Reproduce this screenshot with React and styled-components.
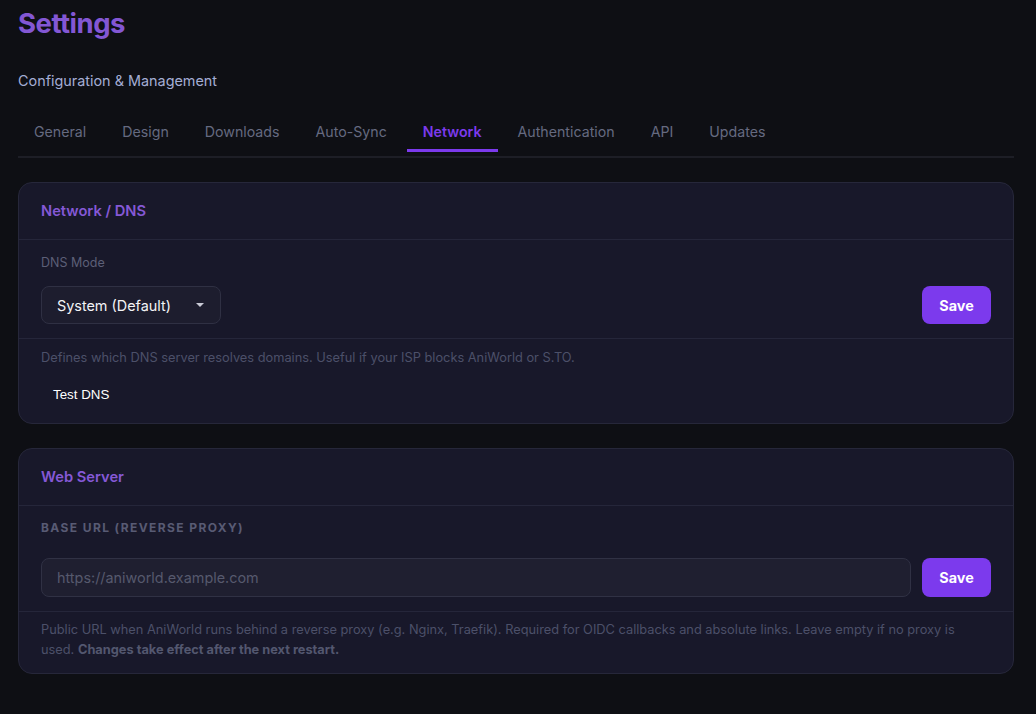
import React, { useState } from "react";
import styled, { createGlobalStyle } from "styled-components";

const GlobalStyle = createGlobalStyle`
  html, body {
    margin: 0;
    padding: 0;
    background: #0e0f14;
  }
  body {
    font-family: Inter, "Noto Sans", "Liberation Sans", sans-serif;
    color: #e5e7eb;
  }
  * {
    box-sizing: border-box;
  }
`;

const Page = styled.div`
  width: 996px;
  margin-left: 18px;
  padding-top: 5px;
  padding-bottom: 40px;
`;

const Title = styled.h1`
  margin: 0;
  font-size: 27.5px;
  line-height: 36px;
  font-weight: 700;
  color: #8357d4;
  letter-spacing: -0.5px;
`;

const Subtitle = styled.p`
  margin: 30px 0 0;
  font-size: 14.4px;
  line-height: 20px;
  color: #a4add4;
`;

const TabBar = styled.nav`
  display: flex;
  gap: 4px;
  margin-top: 21px;
  padding-bottom: 4px;
  border-bottom: 2px solid #1d1e26;
`;

const Tab = styled.button`
  background: none;
  border: none;
  border-bottom: 3px solid ${(p) => (p.$active ? "#7c3aed" : "transparent")};
  padding: 10px 16px 7px;
  font-family: inherit;
  font-size: 14.2px;
  line-height: 20px;
  font-weight: ${(p) => (p.$active ? 600 : 400)};
  color: ${(p) => (p.$active ? "#7c3aed" : "#656a80")};
  cursor: pointer;
`;

const Cards = styled.div`
  display: flex;
  flex-direction: column;
  gap: 24px;
  margin-top: 24px;
`;

const Card = styled.section`
  background: #18182a;
  border: 1px solid #26273a;
  border-radius: 14px;
`;

const CardHeader = styled.h2`
  margin: 0;
  padding: 18px 22px;
  font-size: 14.7px;
  line-height: 20px;
  font-weight: 600;
  color: #8558d6;
  border-bottom: 1px solid #25263a;
`;

const CardBody = styled.div`
  padding: ${(p) => p.$pad || "14px 22px 14px"};
`;

const Label = styled.div`
  font-size: 12.5px;
  line-height: 18px;
  color: #5c5f77;
  margin-bottom: 14px;
`;

const CapsLabel = styled.div`
  font-size: 12px;
  line-height: 16px;
  font-weight: 700;
  letter-spacing: 1.4px;
  text-transform: uppercase;
  color: #585b74;
  margin-bottom: 22px;
`;

const Row = styled.div`
  display: flex;
  align-items: center;
  justify-content: space-between;
  gap: 11px;
`;

const Select = styled.div`
  width: 180px;
  height: 38px;
  display: flex;
  align-items: center;
  justify-content: space-between;
  padding: 0 16px 0 15px;
  background: #1d1d2e;
  border: 1px solid #2f3043;
  border-radius: 8px;
  font-size: 14.4px;
  color: #f3f4f6;
`;

const Caret = styled.span`
  width: 0;
  height: 0;
  border-left: 4px solid transparent;
  border-right: 4px solid transparent;
  border-top: 4px solid #c9cad6;
`;

const Input = styled.input`
  flex: 1;
  height: 39px;
  padding: 0 15px;
  background: #1f1f30;
  border: 1px solid #303144;
  border-radius: 8px;
  font-family: inherit;
  font-size: 14.4px;
  color: #e5e7eb;
  outline: none;
  &::placeholder {
    color: #56596d;
  }
`;

const SaveButton = styled.button`
  width: 69px;
  height: ${(p) => p.$h || 38}px;
  border: none;
  border-radius: 8px;
  background: #7c3aed;
  color: #ffffff;
  font-family: inherit;
  font-size: 14.4px;
  font-weight: 700;
  cursor: pointer;
  flex-shrink: 0;
`;

const Footer = styled.div`
  border-top: 1px solid #25263a;
  padding: ${(p) => p.$pad || "10px 22px 12px"};
`;

const Help = styled.p`
  margin: 0;
  font-size: 12.8px;
  line-height: ${(p) => p.$lh || 18}px;
  color: #4c5069;
  b {
    font-weight: 700;
    color: #53576f;
  }
`;

const GhostButton = styled.button`
  margin-top: 12px;
  padding: 8px 12px;
  background: none;
  border: none;
  font-family: "Liberation Sans", Arial, sans-serif;
  font-size: 13.33px;
  line-height: 16px;
  color: #ffffff;
  cursor: pointer;
`;

const tabs = [
  "General",
  "Design",
  "Downloads",
  "Auto-Sync",
  "Network",
  "Authentication",
  "API",
  "Updates",
];

export default function App() {
  const [active, setActive] = useState("Network");
  const [baseUrl, setBaseUrl] = useState("");

  return (
    <>
      <GlobalStyle />
      <Page>
        <Title>Settings</Title>
        <Subtitle>Configuration &amp; Management</Subtitle>
        <TabBar>
          {tabs.map((t) => (
            <Tab key={t} $active={t === active} onClick={() => setActive(t)}>
              {t}
            </Tab>
          ))}
        </TabBar>

        <Cards>
          <Card>
            <CardHeader>Network / DNS</CardHeader>
            <CardBody>
              <Label>DNS Mode</Label>
              <Row>
                <Select>
                  <span>System (Default)</span>
                  <Caret />
                </Select>
                <SaveButton>Save</SaveButton>
              </Row>
            </CardBody>
            <Footer>
              <Help>
                Defines which DNS server resolves domains. Useful if your ISP
                blocks AniWorld or S.TO.
              </Help>
              <GhostButton>Test DNS</GhostButton>
            </Footer>
          </Card>

          <Card>
            <CardHeader>Web Server</CardHeader>
            <CardBody $pad="14px 22px 14px">
              <CapsLabel>Base URL (Reverse Proxy)</CapsLabel>
              <Row>
                <Input
                  value={baseUrl}
                  onChange={(e) => setBaseUrl(e.target.value)}
                  placeholder="https://aniworld.example.com"
                />
                <SaveButton $h={39}>Save</SaveButton>
              </Row>
            </CardBody>
            <Footer $pad="8px 22px 13px">
              <Help $lh={20}>
                Public URL when AniWorld runs behind a reverse proxy (e.g.
                Nginx, Traefik). Required for OIDC callbacks and absolute links.
                Leave empty if no proxy is used.{" "}
                <b>Changes take effect after the next restart.</b>
              </Help>
            </Footer>
          </Card>
        </Cards>
      </Page>
    </>
  );
}
